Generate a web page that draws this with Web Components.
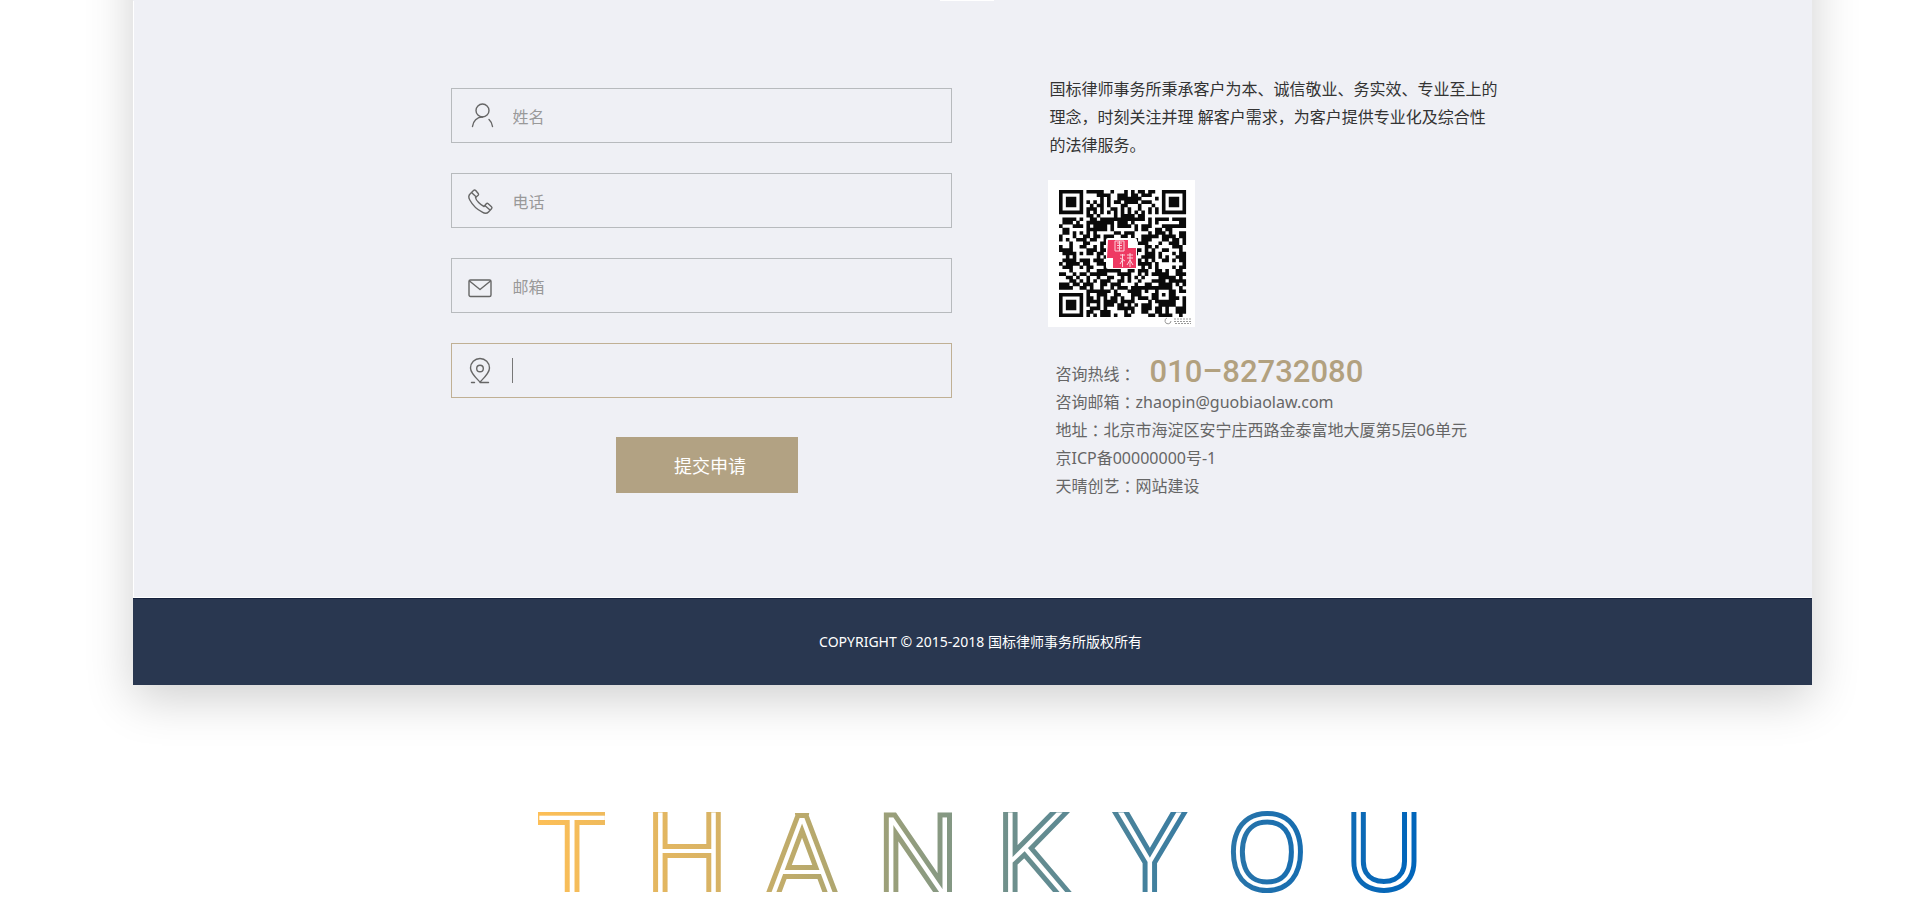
<!DOCTYPE html>
<html lang="zh-CN">
<head>
<meta charset="utf-8">
<title>国标律师事务所</title>
<style>
  body {
    margin: 0;
    background: #fff;
    color: #333;
    font: 16px/28px "Noto Sans", "Noto Sans CJK SC", sans-serif;
  }
</style>
</head>
<body>

<law-page>
  <apply-form slot="form">
    <form-field icon="user" label="姓名"></form-field>
    <form-field icon="phone" label="电话"></form-field>
    <form-field icon="mail" label="邮箱"></form-field>
    <form-field icon="pin" label="地址" active></form-field>
  </apply-form>
  <firm-contact slot="contact"></firm-contact>
  <span slot="copyright">COPYRIGHT © 2015-2018 国标律师事务所版权所有</span>
</law-page>
<thank-you></thank-you>

<script>
const define = (name, html, setup) => {
  const template = document.createElement("template")
  template.innerHTML = html

  window.customElements.define(name, class extends HTMLElement {
    constructor() {
      super()
      this.attachShadow({ mode: "open" })
      this.shadowRoot.appendChild(template.content.cloneNode(true))
    }

    connectedCallback() {
      if (setup) setup(this, this.shadowRoot)
    }
  })
}

define("law-page", /*html*/`
  <style>
    :host {
      display: block;
      overflow: hidden;
      padding: 0 108px 72px 133px;
    }

    .sheet {
      margin-top: -80px;
      padding-top: 80px;
      background: #eff0f5;
      box-shadow: 0 14px 45px rgba(0, 0, 0, .19);
    }

    .tab {
      width: 54px;
      height: 1px;
      margin: 0 calc(50% - 21px) 0 auto;
      background: #fff;
    }

    .columns {
      display: grid;
      grid-template-columns: minmax(0, 501px) minmax(0, 442px);
      column-gap: 98px;
      justify-content: center;
      padding: 74px 4px 97px 0;
      border-left: 1px solid #fff;
      border-bottom: 1px solid #fff;
    }

    footer {
      padding: 29px 0 29px 16px;
      background: #293750;
      border-top: 1px solid #15213c;
      color: #fff;
      font-size: 14px;
      text-align: center;
    }
  </style>

  <div class="sheet">
    <div class="tab"></div>
    <main class="columns">
      <slot name="form"></slot>
      <slot name="contact"></slot>
    </main>
    <footer><slot name="copyright"></slot></footer>
  </div>
`)

define("apply-form", /*html*/`
  <style>
    :host {
      display: block;
      padding-top: 13px;
    }

    form {
      display: flex;
      flex-direction: column;
      gap: 30px;
    }

    button {
      align-self: center;
      width: 182px;
      height: 56px;
      margin: 9px 0 0 12px;
      padding: 2px 0 0 6px;
      border: none;
      background: #b2a283;
      color: #fff;
      font: inherit;
      font-size: 18px;
      cursor: pointer;
    }
  </style>

  <form>
    <slot></slot>
    <button type="submit">提交申请</button>
  </form>
`)

const icons = {
  user: `<circle cx="14.5" cy="8.5" r="6.5"/><path d="M4.500 24.500c.5-5.500 4.500-9.500 10-9.500M21 17.500c2 1.800 3.200 4 3.500 7"/>`,
  phone: `<path d="M2.500 6.500 5.500 3.500c.7-.7 1.500-.7 2.200 0l2.500 3c.5.700.5 1.300 0 1.800L7.500 10.500c.5 3 5 7.500 8.500 9l2.300-2.800c.6-.6 1.200-.6 1.900 0l3.300 3c.6.600.6 1.400 0 2l-3 3.200c-1.500 1.600-4 1.600-6.200.2C9 22.500 4.500 18 1.800 13 .3 10.500.8 8 2.500 6.500ZM3.500 5.500l4.800 4.600M16.800 18.500l5.200 4.600"/>`,
  mail: `<rect x="1" y="8" width="22" height="16.500" rx="1.500"/><path d="m1.500 9 10.500 8.500L22.500 9"/>`,
  pin: `<path d="M12 25C7.500 20.500 2.500 16 2.500 11a9.500 9.500 0 0 1 19 0c0 5-5 9.500-9.500 14ZM3.500 25.500h3M12 25.500h8.500"/><circle cx="12" cy="11.500" r="3.300"/>`,
}

define("form-field", /*html*/`
  <style>
    :host {
      display: block;
    }

    label {
      display: flex;
      align-items: center;
      box-sizing: border-box;
      height: 55px;
      padding: 0 16px;
      border: 1px solid #b7babd;
    }

    :host([active]) label {
      border-color: #c0b094;
    }

    svg {
      flex: none;
      width: 24px;
      height: 28px;
      margin-right: 20px;
      overflow: visible;
      fill: none;
      stroke: #666;
      stroke-width: 1.4;
      stroke-linecap: round;
      stroke-linejoin: round;
    }

    .caret {
      display: none;
      width: 1px;
      height: 25px;
      background: #777;
    }

    :host([active]) .caret {
      display: block;
    }

    input {
      flex: 1;
      min-width: 0;
      padding: 3px 0 0 1px;
      border: none;
      outline: none;
      background: none;
      color: #666;
      font: inherit;
    }

    input::placeholder {
      color: #999;
      opacity: 1;
    }
  </style>

  <label>
    <svg viewBox="0 0 24 28" aria-hidden="true"></svg>
    <span class="caret"></span>
    <input type="text">
  </label>
`, (host, root) => {
  const input = root.querySelector("input")
  root.querySelector("svg").innerHTML = icons[host.getAttribute("icon")]
  input.setAttribute("aria-label", host.getAttribute("label"))
  if (!host.hasAttribute("active")) input.placeholder = host.getAttribute("label")
})

define("firm-contact", /*html*/`
  <style>
    :host {
      display: block;
      white-space: nowrap;
    }

    p {
      margin: 0 0 21px;
    }

    /* full-width colons that sit in the middle of their cell */
    i {
      font-family: "Noto Sans CJK TC", sans-serif;
      font-style: normal;
    }

    ul {
      margin: 33px 0 0;
      padding: 0 0 0 6px;
      list-style: none;
      color: #666;
    }

    li {
      display: flex;
      align-items: center;
      height: 28px;
    }

    a {
      color: inherit;
      text-decoration: none;
    }

    .tel {
      align-self: flex-start;
      margin-left: 14px;
      color: #b2a17f;
      font: 500 31px/24px Roboto, sans-serif;
    }
  </style>

  <p>国标律师事务所秉承客户为本、诚信敬业、务实效、专业至上的<br>理念，时刻关注并理 解客户需求，为客户提供专业化及综合性<br>的法律服务。</p>
  <qr-code></qr-code>
  <ul>
    <li>咨询热线<i lang="zh-TW">：</i><a class="tel" href="tel:01082732080">010–82732080</a></li>
    <li>咨询邮箱<i lang="zh-TW">：</i><a href="mailto:zhaopin@guobiaolaw.com">zhaopin@guobiaolaw.com</a></li>
    <li>地址<i lang="zh-TW">：</i>北京市海淀区安宁庄西路金泰富地大厦第5层06单元</li>
    <li>京ICP备00000000号-1</li>
    <li>天晴创艺<i lang="zh-TW">：</i><a href="#">网站建设</a></li>
  </ul>
`)

define("qr-code", /*html*/`
  <style>
    :host {
      display: block;
      width: 147px;
      height: 147px;
      margin-left: -2px;
      background: #fff;
    }

    svg {
      display: block;
    }
  </style>

  <svg viewBox="0 0 147 147" role="img" aria-label="QR">
    <g transform="translate(11 10) scale(3.430)">
      <path class="modules" fill="#0a0a0a"/>
    </g>
    <rect x="58" y="58" width="31" height="31" rx="2" fill="#fff"/>
    <path fill="#ee3a63" d="M60 60h20v8h8v20H65V78h-6z"/>
    <g fill="none" stroke="#fbd0da">
      <path d="M67 61h9v10h-9zM69 63h5M69 65.500h5M69 68h5M71.500 61v10"/>
      <path d="M72 75h5M74.500 74v13M72 78l5 3M79 75h6M82 73v14M79 78h6M79 85l3-5 3 5M72 84l3-5"/>
    </g>
    <g fill="none" stroke="#999">
      <path d="M119 138a3 3 0 1 0 4 3"/>
      <path stroke-dasharray="2 1" d="M126 139h17M126 141.500h17M127 143.500h16"/>
    </g>
  </svg>
`, (host, root) => {
  const size = 37
  const corners = [[0, 0], [size - 7, 0], [0, size - 7]]
  let seed = 2018
  let d = ""

  for (let y = 0; y < size; y++) {
    for (let x = 0; x < size; x++) {
      seed = (seed * 1103515245 + 12345) % 2147483648
      let dark = seed / 2147483648 < .52
      if (x === 6 || y === 6) dark = (x + y) % 2 === 0
      const ring = Math.max(Math.abs(x - 30), Math.abs(y - 30))
      if (ring < 3) dark = ring !== 1
      corners.forEach(([cx, cy]) => {
        const r = Math.max(Math.abs(x - cx - 3), Math.abs(y - cy - 3))
        if (r < 5) dark = r !== 4 && r !== 2
      })
      if (dark) d += `M${x} ${y}h1.050v1.050h-1.050z`
    }
  }
  root.querySelector(".modules").setAttribute("d", d)
})

define("thank-you", /*html*/`
  <style>
    :host {
      display: flex;
      justify-content: center;
      padding: 55px 0 8px 36px;
    }

    svg {
      width: 880px;
      height: 81px;
      overflow: visible;
    }

    /* a wide stroke under a thin white letter leaves two parallel lines */
    text {
      fill: #fff;
      stroke: url(#fade);
      stroke-width: 10;
      stroke-miterlimit: 3;
      paint-order: stroke;
      font-family: Roboto, sans-serif;
      font-size: 112px;
      font-weight: 200;
      text-anchor: middle;
    }

    .wide {
      font-size: 120px;
    }

    .round {
      font-family: "Noto Sans", sans-serif;
      font-size: 98px;
    }
  </style>

  <svg viewBox="0 0 880 81" role="img" aria-label="THANK YOU">
    <defs>
      <linearGradient id="fade" gradientUnits="userSpaceOnUse" x1="0" y1="0" x2="880" y2="0">
        <stop offset="0" stop-color="#fdbf57"/>
        <stop offset=".2" stop-color="#d8b365"/>
        <stop offset=".32" stop-color="#b5a86d"/>
        <stop offset=".44" stop-color="#8d9b80"/>
        <stop offset=".57" stop-color="#648c90"/>
        <stop offset=".7" stop-color="#42809e"/>
        <stop offset=".83" stop-color="#1f70ad"/>
        <stop offset="1" stop-color="#0065bb"/>
      </linearGradient>
      <!-- cuts the line ends so that the letters stay open -->
      <clipPath id="ends"><path d="M0 0h67v80H0zM80 0h610v80H80zM780 0h100v85H780z"/></clipPath>
    </defs>
    <g clip-path="url(#ends)">
      <text class="wide" x="34" y="90">T</text>
      <text x="149" y="80">H</text>
      <text x="264" y="85">A</text>
      <text x="380" y="85">N</text>
      <text x="495" y="80">K</text>
      <text x="612" y="80">Y</text>
      <text x="846" y="75">U</text>
    </g>
    <text class="round" x="729" y="75">O</text>
  </svg>
`)
</script>
</body>
</html>
